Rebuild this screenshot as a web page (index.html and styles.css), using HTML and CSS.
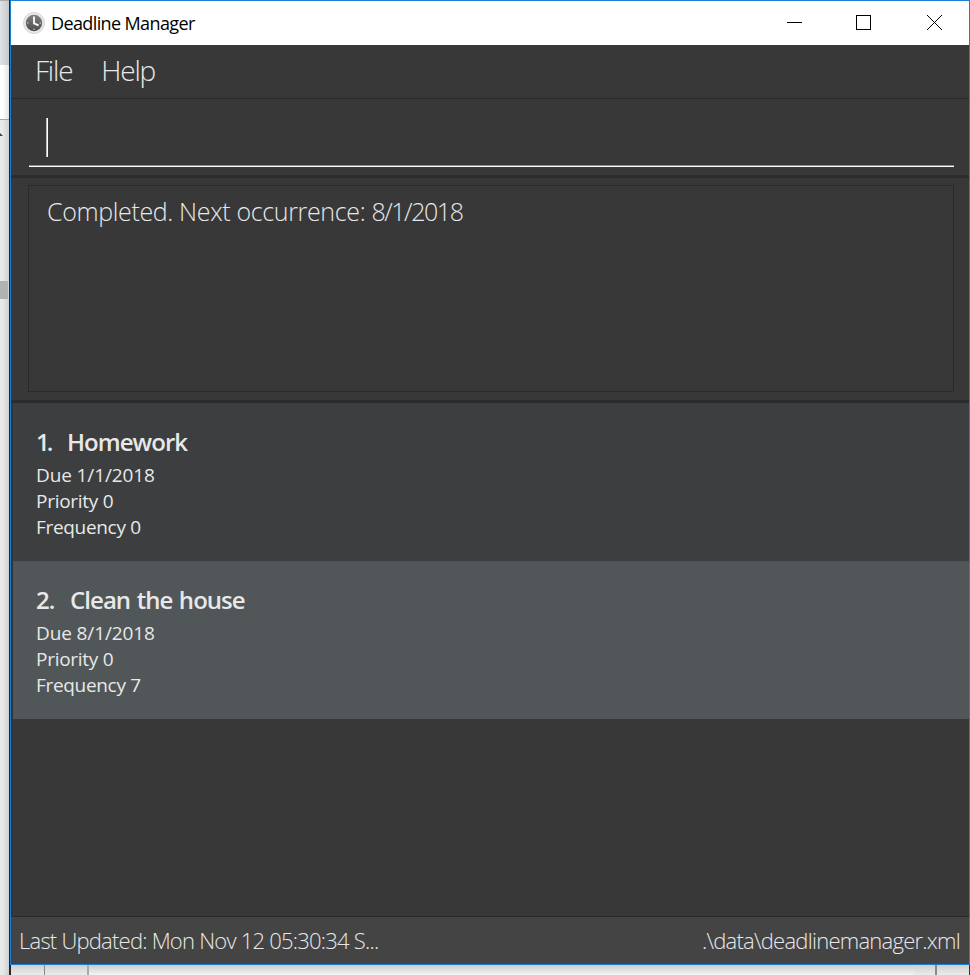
FILE: index.html
```html
<!DOCTYPE html>
<html lang="en">
<head>
<meta charset="utf-8">
<title>Deadline Manager</title>
<link rel="stylesheet" href="styles.css">
</head>
<body>
<div class="desktop">
  <aside class="backdrop-side"><div class="side-head"></div><div class="side-page"></div><div class="side-rail"><span class="side-arrow"></span><span class="side-thumb"></span></div></aside>
  <main class="window">
    <header class="titlebar">
      <svg class="app-icon" width="22" height="22" viewBox="0 0 22 22">
        <defs><linearGradient id="face" x1="0" y1="0" x2="0" y2="1"><stop offset="0" stop-color="#808080"/><stop offset="1" stop-color="#4c4c4c"/></linearGradient></defs>
        <circle cx="11" cy="11" r="10.5" fill="#e9e9e9" stroke="#d4d4d4"/>
        <circle cx="11" cy="11" r="8.2" fill="url(#face)"/>
        <path d="M11 4.5V11.3L15.6 13.4" fill="none" stroke="#fff" stroke-width="1.8"/>
        <path d="M11 16.6v1.4M4 11h1.4M16.6 11H18" stroke="#ddd"/>
      </svg>
      <span class="app-name">Deadline Manager</span>
      <svg class="controls" width="158" height="18" viewBox="0 0 158 18" fill="none" stroke="#000">
        <path d="M1 9.5H16" shape-rendering="crispEdges"/>
        <rect x="70.5" y="2.5" width="14" height="14" shape-rendering="crispEdges"/>
        <path d="M141 2L156 17M156 2L141 17"/>
      </svg>
    </header>
    <nav class="menu"><span class="file">File</span><span class="help">Help</span></nav>
    <section class="command"><div class="field"><span class="caret"></span></div></section>
    <section class="result"><div class="output">Completed. Next occurrence: <span class="date">8/1/2018</span></div></section>
    <section class="tasks">
      <article class="task">
        <h2><span class="number first">1.</span><span class="name">Homework</span></h2>
        <p class="due">Due 1/1/2018</p><p class="priority">Priority 0</p><p class="frequency">Frequency 0</p>
      </article>
      <article class="task selected">
        <h2><span class="number">2.</span><span class="name">Clean the house</span></h2>
        <p class="due">Due 8/1/2018</p><p class="priority">Priority 0</p><p class="frequency">Frequency 7</p>
      </article>
    </section>
    <footer class="status"><span class="updated">Last Updated: Mon Nov 12 05:30:34 S...</span><span class="path">.\data\deadlinemanager.xml</span></footer>
  </main>
  <div class="backdrop-bottom"><i class="seg a"></i><i class="seg b"></i><i class="seg c"></i><i class="seg d"></i><i class="seg e"></i></div>
</div>
</body>
</html>
```
FILE: styles.css
```css
* { box-sizing: border-box; }
body { margin: 0; background: #ececec; font-family: "Open Sans", "Noto Sans", sans-serif; overflow: hidden; }
.desktop { width: 970px; height: 975px; display: grid; grid-template: 965px 10px / 10px 960px; }
.backdrop-side { grid-row: 1 / 3; display: flex; flex-direction: column; border-right: 1px solid #262626; background: linear-gradient(90deg, #e9e9e9 30%, #cfcfcf); }
.side-head { height: 65px; background: linear-gradient(90deg, #dfe3e6, #c5c9cc); border-top: 1px solid #aaa; }
.side-page { height: 55px; background: linear-gradient(90deg, #fff 30%, #e2e2e2); border-bottom: 1px solid #a5a5a5; }
.side-rail { display: flex; flex-direction: column; }
.side-arrow { width: 3px; height: 3px; margin-top: 13px; background: #444; clip-path: polygon(0 0, 100% 100%, 0 100%); }
.side-thumb { width: 8px; height: 18px; margin-top: 145px; background: #b2b2b2; }
.window { display: flex; flex-direction: column; border: 1px solid #1c7fd3; background: #383838; color: #e8e8e8; }
.titlebar { height: 44px; display: flex; align-items: center; padding: 0 25px 0 12px; background: #fff; color: #000; }
.app-icon { margin: 0 6px 1px 0; }
.app-name { font-size: 18px; letter-spacing: -0.62px; flex: 1; white-space: nowrap; }
.controls { margin-bottom: 2px; }
.menu { height: 54px; display: flex; padding: 6px 0 0 24px; border-bottom: 1px solid #2a2a2a; font-size: 28px; line-height: 38px; font-weight: 300; letter-spacing: -1.2px; }
.help { margin-left: 29px; }
.command { height: 79px; padding: 19px 15px 0 18px; border-bottom: 3px solid #2c2c2c; }
.field { height: 49px; padding-left: 17px; border-bottom: 1px solid #fff; box-shadow: inset 0 -1px #8b8b8b; }
.caret { display: block; width: 2px; height: 39px; background: linear-gradient(90deg, #bbb 50%, #fff 50%); }
.result { height: 225px; padding: 7px 15px 0 17px; border-bottom: 3px solid #2c2c2c; }
.output { height: 207px; padding: 8px 18px; border: 1px solid #2a2a2a; font-size: 25px; line-height: 34px; font-weight: 300; letter-spacing: -0.35px; white-space: nowrap; }
.date { letter-spacing: -1.45px; }
.tasks { flex: 1; border-bottom: 1px solid #2a2a2a; border-left: 2px solid #333; }
.task { height: 158px; padding: 23px 23px; background: #3c3e3f; }
.selected { background: #515658; }
.task h2 { display: flex; margin: 0 0 4px; font-size: 24px; line-height: 32px; font-weight: 600; letter-spacing: -0.95px; word-spacing: 1.2px; white-space: nowrap; }
.number { width: 34px; }
.first { width: 31px; letter-spacing: -3px; }
.task p { margin: 0; font-size: 19px; line-height: 26px; }
.due { letter-spacing: -0.12px; }
.priority { letter-spacing: -0.27px; }
.frequency { letter-spacing: -0.32px; }
.status { height: 47px; display: flex; justify-content: space-between; padding: 7px 9px 0 8px; background: #444; font-size: 22px; line-height: 32px; font-weight: 300; white-space: nowrap; }
.updated { letter-spacing: -0.77px; }
.path { letter-spacing: -0.74px; }
.backdrop-bottom { display: flex; background: linear-gradient(#cfcfcf, #ececec); }
.seg { height: 10px; }
.a { width: 35px; border-right: 1px solid #888; border-left: 1px solid #262626; }
.b { width: 44px; border-right: 2px solid #aaa; }
.c { flex: 1; background: linear-gradient(#ccc, #f5f5f5); }
.d { width: 23px; border-right: 2px solid #888; }
.e { width: 33px; border-right: 1px solid #333; }
```
